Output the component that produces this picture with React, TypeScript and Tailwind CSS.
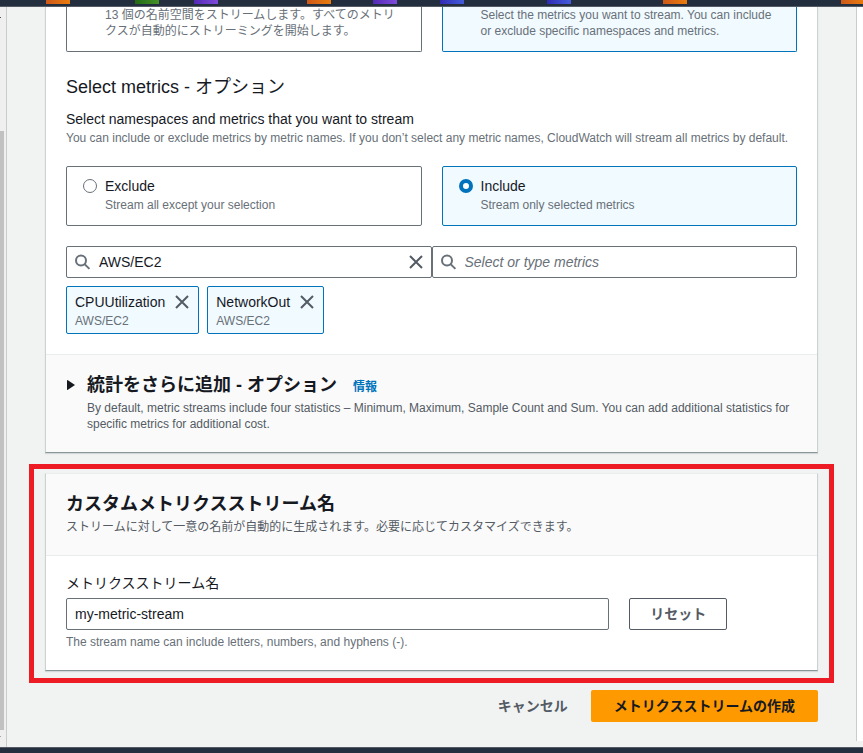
import { useState } from "react";

function SearchIcon() {
  return (
    <svg className="size-4 shrink-0 text-[#687078]" viewBox="0 0 16 16" fill="none" stroke="currentColor" strokeWidth="2" aria-hidden="true">
      <circle cx="6" cy="6.5" r="5" />
      <path d="M9.6 10.1 L14.4 14.9" />
    </svg>
  );
}

function CloseIcon() {
  return (
    <svg className="size-3.5" viewBox="0 0 14 14" fill="none" stroke="currentColor" strokeWidth="2" aria-hidden="true">
      <path d="M1 1 L13 13 M13 1 L1 13" />
    </svg>
  );
}

type TileProps = {
  value: string;
  label: string;
  description: string;
  checked: boolean;
  onSelect: (value: string) => void;
};

function RadioTile({ value, label, description, checked, onSelect }: TileProps) {
  return (
    <label
      className={
        checked
          ? "flex gap-2 rounded-xs border border-[#0073bb] bg-[#f1faff] px-4 pt-2 pb-3"
          : "flex gap-2 rounded-xs border border-[#687078] bg-white px-4 pt-2 pb-3"
      }
    >
      <input
        type="radio"
        name="selection-mode"
        value={value}
        checked={checked}
        onChange={() => onSelect(value)}
        className="mt-1 size-3.5 shrink-0 appearance-none rounded-full border border-[#687078] bg-white checked:border-4 checked:border-[#0073bb]"
      />
      <span className="flex flex-col">
        <span className="text-sm leading-[22px]">{label}</span>
        <span className="text-xs leading-4 text-[#687078]">{description}</span>
      </span>
    </label>
  );
}

function Token({ name, namespace, onRemove }: { name: string; namespace: string; onRemove: () => void }) {
  return (
    <li className="rounded-xs border border-[#0073bb] bg-[#f1faff] py-1 pr-[9px] pl-2">
      <div className="flex items-center gap-2.5 text-sm leading-[22px]">
        {name}
        <button type="button" aria-label={`Remove ${name}`} onClick={onRemove} className="text-[#545b64]">
          <CloseIcon />
        </button>
      </div>
      <div className="text-xs leading-4 text-[#687078]">{namespace}</div>
    </li>
  );
}

const cardClass = "border border-x-[#ccd1d1] border-t-[#eaeded] border-b-[#879596] bg-white shadow-[0_1px_1px_rgba(0,28,36,0.12)]";

export default function App() {
  const [mode, setMode] = useState("include");
  const [namespace, setNamespace] = useState("AWS/EC2");
  const [metric, setMetric] = useState("");
  const [tokens, setTokens] = useState(["CPUUtilization", "NetworkOut"]);
  const [name, setName] = useState("my-metric-stream");

  return (
    <div className="flex min-h-screen flex-col overflow-x-hidden bg-[#f1f3f3] font-['Liberation_Sans','Noto_Sans_CJK_JP',sans-serif] text-[#16191f]">
      <header className="flex h-[7px] items-start overflow-hidden border-b border-[#545b64] bg-[#232f3e]">
        <span className="ml-[46px] h-1 w-6 shrink-0 bg-linear-to-r from-[#ce5818] to-[#ea7d0c]" />
        <span className="ml-[65px] h-1 w-6 shrink-0 bg-linear-to-r from-[#226a14] to-[#459227]" />
        <span className="ml-[35px] h-1 w-6 shrink-0 bg-linear-to-r from-[#5329b4] to-[#7f4bdc]" />
        <span className="ml-[89px] h-1 w-6 shrink-0 bg-linear-to-r from-[#ce5818] to-[#ea7d0c]" />
        <span className="ml-[42px] h-1 w-6 shrink-0 bg-linear-to-r from-[#5329b4] to-[#7f4bdc]" />
        <span className="ml-[43px] h-1 w-6 shrink-0 bg-linear-to-r from-[#3029b4] to-[#435cdc]" />
        <span className="ml-[83px] h-1 w-6 shrink-0 bg-linear-to-r from-[#3029b4] to-[#435cdc]" />
        <span className="ml-[92px] h-1 w-6 shrink-0 bg-linear-to-r from-[#ce5818] to-[#ea7d0c]" />
        <span className="ml-[154px] h-1 w-6 shrink-0 bg-linear-to-r from-[#ce5818] to-[#ea7d0c]" />
      </header>

      <div className="flex flex-1">
        <aside className="flex w-[7px] shrink-0 flex-col border-r border-[#c8cccc] bg-[#efefef]">
          <span className="mt-2.5 h-px w-px bg-[#505050]" />
          <span className="mt-[113px] mb-1.5 w-1 flex-1 bg-[#c1c1c1]" />
          <span className="mb-2.5 h-px w-px bg-[#a3a3a3]" />
        </aside>

        <main className="min-w-0 flex-1 px-[38px]">
          <section className={`${cardClass} border-t-0`}>
            <div className="px-5 pb-5">
              <div className="grid grid-cols-2 gap-5 text-xs leading-4 text-[#687078]">
                <p className="rounded-b-xs border border-t-0 border-[#687078] pr-4 pb-3 pl-[38px]">
                  13 個の名前空間をストリームします。すべてのメトリクスが自動的にストリーミングを開始します。
                </p>
                <p className="rounded-b-xs border border-t-0 border-[#0073bb] bg-[#f1faff] pr-4 pb-3 pl-[38px]">
                  Select the metrics you want to stream. You can include or exclude specific namespaces and metrics.
                </p>
              </div>

              <h2 className="mt-6 text-lg leading-[22px]">Select metrics - オプション</h2>
              <h3 className="mt-2.5 text-sm leading-[22px]">Select namespaces and metrics that you want to stream</h3>
              <p className="text-xs leading-4 text-[#687078]">
                You can include or exclude metrics by metric names. If you don’t select any metric names, CloudWatch will stream all metrics by default.
              </p>

              <div role="radiogroup" aria-label="Selection" className="mt-5 grid grid-cols-2 gap-5">
                <RadioTile value="exclude" label="Exclude" description="Stream all except your selection" checked={mode === "exclude"} onSelect={setMode} />
                <RadioTile value="include" label="Include" description="Stream only selected metrics" checked={mode === "include"} onSelect={setMode} />
              </div>

              <div className="mt-5 grid grid-cols-2">
                <div className="flex h-8 items-center gap-2 rounded-xs border border-[#687078] bg-white px-2">
                  <SearchIcon />
                  <input
                    aria-label="Namespace"
                    value={namespace}
                    onChange={(e) => setNamespace(e.target.value)}
                    className="min-w-0 flex-1 text-sm leading-[22px] outline-none"
                  />
                  <button type="button" aria-label="Clear namespace" onClick={() => setNamespace("")} className="text-[#545b64]">
                    <CloseIcon />
                  </button>
                </div>
                <div className="flex h-8 items-center gap-2 rounded-xs border border-[#687078] bg-white px-2">
                  <SearchIcon />
                  <input
                    aria-label="Metrics"
                    value={metric}
                    onChange={(e) => setMetric(e.target.value)}
                    placeholder="Select or type metrics"
                    className="min-w-0 flex-1 text-sm leading-[22px] outline-none placeholder:text-[#687078] placeholder:italic"
                  />
                </div>
              </div>

              <ul className="mt-2 flex flex-wrap gap-2">
                {tokens.map((token) => (
                  <Token key={token} name={token} namespace="AWS/EC2" onRemove={() => setTokens(tokens.filter((t) => t !== token))} />
                ))}
              </ul>
            </div>

            <div className="flex items-start border-t border-[#eaeded] bg-[#fafafa] px-5 pt-4 pb-5">
              <button type="button" aria-label="統計をさらに追加" className="flex h-7 w-[21px] shrink-0 items-center">
                <svg className="h-2.5 w-[9px]" viewBox="0 0 9 10" fill="currentColor" aria-hidden="true">
                  <path d="M1.5 0 L9 5 L1.5 10 Q1 10 1 9.5 V0.5 Q1 0 1.5 0 Z" />
                </svg>
              </button>
              <div>
                <div className="flex items-baseline gap-4">
                  <h2 className="text-lg leading-[29px] font-bold">統計をさらに追加 - オプション</h2>
                  <a href="#info" className="text-xs leading-4 font-bold text-[#0073bb]">情報</a>
                </div>
                <p className="text-xs leading-4 text-[#545b64]">
                  By default, metric streams include four statistics – Minimum, Maximum, Sample Count and Sum. You can add additional statistics for specific metrics for additional cost.
                </p>
              </div>
            </div>
          </section>

          <div className="relative mt-5">
            <section className={cardClass}>
              <div className="border-b border-[#eaeded] bg-[#fafafa] px-5 pt-4 pb-5">
                <h2 className="text-lg leading-[29px] font-bold">カスタムメトリクスストリーム名</h2>
                <p className="text-xs leading-4 text-[#545b64]">
                  ストリームに対して一意の名前が自動的に生成されます。必要に応じてカスタマイズできます。
                </p>
              </div>
              <div className="px-5 pt-4 pb-5">
                <label htmlFor="stream-name" className="block text-sm leading-[22px]">メトリクスストリーム名</label>
                <div className="mt-1 grid grid-cols-12 gap-5">
                  <input
                    id="stream-name"
                    aria-describedby="stream-name-hint"
                    value={name}
                    onChange={(e) => setName(e.target.value)}
                    className="col-span-9 h-8 rounded-xs border border-[#687078] bg-white px-2 text-sm leading-[22px] outline-none"
                  />
                  <div className="col-span-3">
                    <button
                      type="button"
                      onClick={() => setName("my-metric-stream")}
                      className="h-8 rounded-xs border border-[#545b64] bg-white px-5 text-sm leading-[22px] font-bold text-[#545b64]"
                    >
                      リセット
                    </button>
                  </div>
                </div>
                <p id="stream-name-hint" className="mt-1 text-xs leading-4 text-[#687078]">
                  The stream name can include letters, numbers, and hyphens (-).
                </p>
              </div>
            </section>
            <div className="pointer-events-none absolute -inset-x-4 -top-[9px] -bottom-3 border-5 border-[#ed1c24]" />
          </div>

          <div className="mt-[19px] mb-6 flex justify-end">
            <button type="button" className="h-8 px-[23px] text-sm leading-[22px] font-bold text-[#545b64]">キャンセル</button>
            <button type="button" className="h-8 rounded-xs bg-[#ff9900] px-[23px] text-sm leading-[22px] font-bold">
              メトリクスストリームの作成
            </button>
          </div>
        </main>

        <aside className="mb-1.5 w-[7px] shrink-0 border-l border-[#c8cccc] bg-white" />
      </div>

      <footer className="h-1.5 border-t border-[#545b64] bg-[#232f3e]" />
    </div>
  );
}
